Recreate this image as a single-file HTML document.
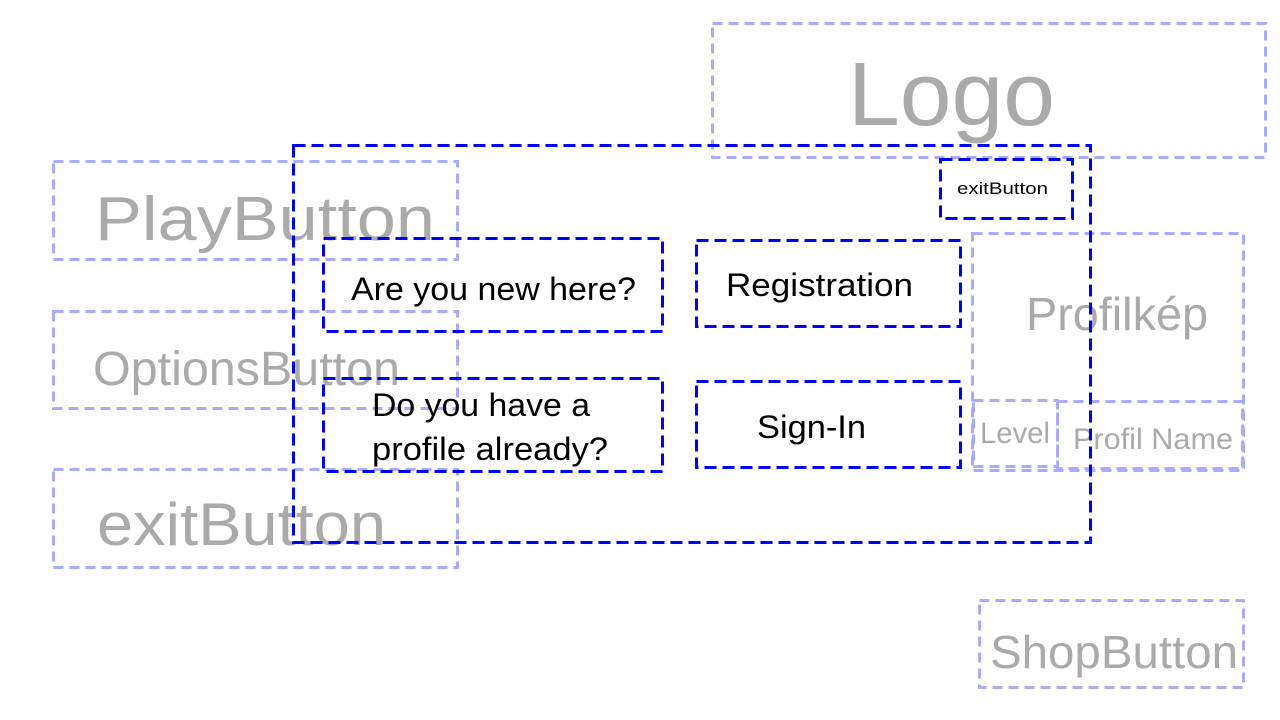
<!DOCTYPE html>
<html><head><meta charset="utf-8"><style>html,body{margin:0;padding:0;background:#fff;width:1280px;height:720px;overflow:hidden}</style></head>
<body>
<svg width="1280" height="720" xmlns="http://www.w3.org/2000/svg" style="display:block;font-family:'Liberation Sans',sans-serif">
<g fill="none" stroke="#aaaaff" stroke-width="3" stroke-dasharray="10 6">
<rect x="712.5" y="23.5" width="553" height="134"/>
<rect x="53.5" y="161.5" width="404" height="98"/>
<rect x="53.5" y="311.5" width="404" height="97"/>
<rect x="53.5" y="469.5" width="404" height="98"/>
<rect x="972.5" y="233.5" width="271" height="237"/>
<rect x="973.5" y="400.5" width="84" height="66"/>
<rect x="1057.5" y="401.5" width="185" height="67"/>
<rect x="979.5" y="600.5" width="264" height="87"/>
</g>
<g fill="#aaaaaa" lengthAdjust="spacingAndGlyphs">
<text x="848" y="125" font-size="90" textLength="207" lengthAdjust="spacingAndGlyphs">Logo</text>
<text x="95" y="240" font-size="62" textLength="340" lengthAdjust="spacingAndGlyphs">PlayButton</text>
<text x="93" y="385" font-size="48" textLength="307" lengthAdjust="spacingAndGlyphs">OptionsButton</text>
<text x="97" y="545" font-size="60" textLength="289" lengthAdjust="spacingAndGlyphs">exitButton</text>
<text x="1026" y="330" font-size="46" textLength="182" lengthAdjust="spacingAndGlyphs">Profilkép</text>
<text x="980" y="443" font-size="30" textLength="70" lengthAdjust="spacingAndGlyphs">Level</text>
<text x="1073" y="449" font-size="30" textLength="160" lengthAdjust="spacingAndGlyphs">Profil Name</text>
<text x="990" y="668" font-size="46" textLength="248" lengthAdjust="spacingAndGlyphs">ShopButton</text>
</g>
<g fill="none" stroke="#0000ff" stroke-width="3" stroke-dasharray="12 6">
<rect x="293.5" y="145.5" width="797" height="397"/>
<rect x="940.5" y="159.5" width="132" height="59"/>
<rect x="323.5" y="238.5" width="339" height="93"/>
<rect x="696.5" y="240.5" width="264" height="86"/>
<rect x="323.5" y="378.5" width="339" height="93"/>
<rect x="696.5" y="381.5" width="264" height="86"/>
</g>
<g fill="#000">
<text x="957" y="194" font-size="17" textLength="91" lengthAdjust="spacingAndGlyphs">exitButton</text>
<text x="351" y="300" font-size="32" textLength="285" lengthAdjust="spacingAndGlyphs">Are you new here?</text>
<text x="726" y="296" font-size="32" textLength="187" lengthAdjust="spacingAndGlyphs">Registration</text>
<text x="372" y="416" font-size="32" textLength="218" lengthAdjust="spacingAndGlyphs">Do you have a</text>
<text x="372" y="460" font-size="32" textLength="236" lengthAdjust="spacingAndGlyphs">profile already?</text>
<text x="757" y="438" font-size="32" textLength="109" lengthAdjust="spacingAndGlyphs">Sign-In</text>
</g>
</svg>
</body></html>
